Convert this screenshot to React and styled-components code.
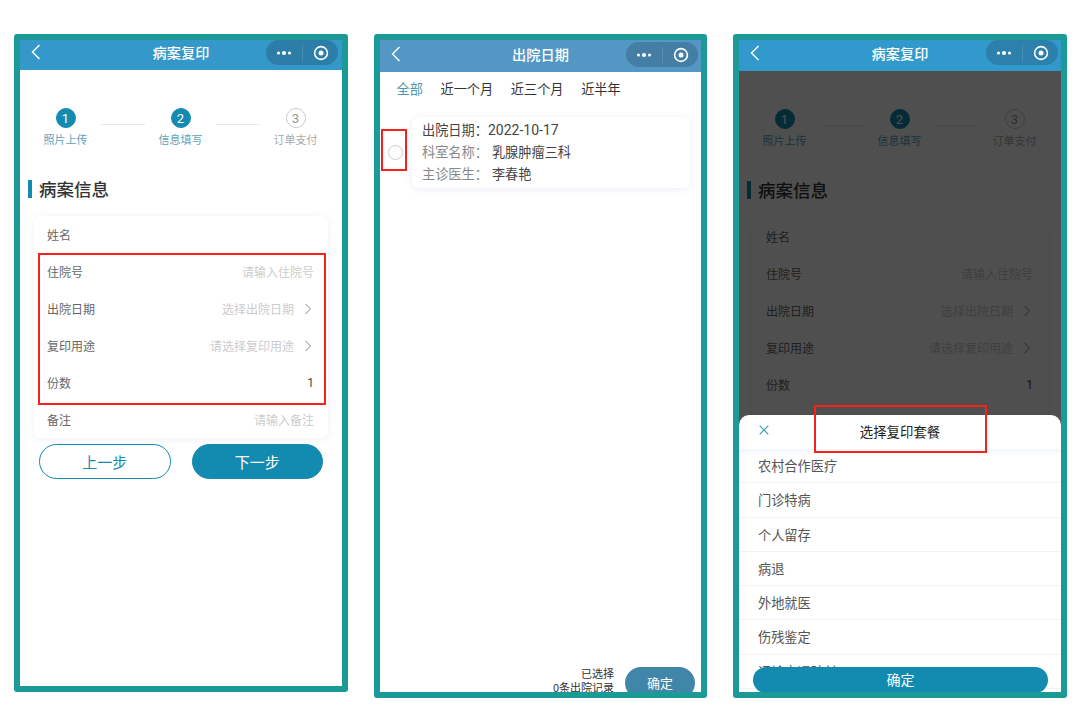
import React from "react";
import styled, { createGlobalStyle } from "styled-components";

const formRows = [
    { label: "姓名", value: "" },
    { label: "住院号", value: "请输入住院号" },
    { label: "出院日期", value: "选择出院日期", arrow: true },
    { label: "复印用途", value: "请选择复印用途", arrow: true },
    { label: "份数", value: "1", filled: true },
    { label: "备注", value: "请输入备注" },
];

const steps = [
    { no: 1, label: "照片上传", active: true },
    { no: 2, label: "信息填写", active: true },
    { no: 3, label: "订单支付", active: false },
];

const tabs = ["全部", "近一个月", "近三个月", "近半年"];

const purposes = ["农村合作医疗", "门诊特病", "个人留存", "病退", "外地就医", "伤残鉴定", "运输交通赔付"];

const NavBar = ({ title, color, pillColor, height, pillTop, pillRight, titleTop }) => (
    <Header $color={color} $height={height}>
        <BackIcon viewBox="0 0 10 16" $top={titleTop + 2}>
            <path d="M8.5 1 L1.5 8 L8.5 15" />
        </BackIcon>
        <HeaderTitle $top={titleTop}>{title}</HeaderTitle>
        <Capsule $color={pillColor} $top={pillTop} $right={pillRight}>
            <svg width="16" height="6" viewBox="0 0 16 6">
                <circle cx="2.5" cy="3" r="1.6" fill="#fff" />
                <circle cx="8" cy="3" r="2.1" fill="#fff" />
                <circle cx="13.5" cy="3" r="1.6" fill="#fff" />
            </svg>
            <CapsuleLine />
            <svg width="16" height="16" viewBox="0 0 16 16">
                <circle cx="8" cy="8" r="6.4" fill="none" stroke="#fff" strokeWidth="1.6" />
                <circle cx="8" cy="8" r="2.5" fill="#fff" />
            </svg>
        </Capsule>
    </Header>
);

const RecordForm = ({ cardGap }) => (
    <>
        <Steps>
            {steps.map((step, index) => (
                <React.Fragment key={step.no}>
                    {index > 0 && <StepLine />}
                    <Step>
                        <StepNo $active={step.active}>{step.no}</StepNo>
                        <StepLabel $active={step.active}>{step.label}</StepLabel>
                    </Step>
                </React.Fragment>
            ))}
        </Steps>
        <SectionTitle>病案信息</SectionTitle>
        <FormCard $gap={cardGap}>
            {formRows.map((row) => (
                <FormRow key={row.label}>
                    <span>{row.label}</span>
                    <FormValue $filled={row.filled}>
                        {row.value}
                        {row.arrow && (
                            <ArrowIcon viewBox="0 0 8 12">
                                <path d="M1.5 1 L6.5 6 L1.5 11" />
                            </ArrowIcon>
                        )}
                    </FormValue>
                </FormRow>
            ))}
        </FormCard>
        <Buttons>
            <StepButton>上一步</StepButton>
            <StepButton $primary>下一步</StepButton>
        </Buttons>
    </>
);

const App = () => (
    <Page>
        <GlobalStyle />

        <Phone $height={658}>
            <NavBar title="病案复印" color="#3498cb" pillColor="#2c7ea9" height={30} pillTop={0} pillRight={4} titleTop={2} />
            <RecordForm cardGap={18} />
            <Highlight $left={18} $top={213} $width={288} $height={152} />
        </Phone>

        <Phone $height={664} $width={333}>
            <NavBar title="出院日期" color="#5397c5" pillColor="#457ea5" height={32} pillTop={2} pillRight={3} titleTop={4} />
            <Tabs>
                {tabs.map((tab, index) => (
                    <Tab key={tab} $active={index === 0}>{tab}</Tab>
                ))}
            </Tabs>
            <RecordRow>
                <Radio />
                <RecordCard>
                    <RecordLine $dark>出院日期：<DateValue>2022-10-17</DateValue></RecordLine>
                    <RecordLine>科室名称：<RecordValue>乳腺肿瘤三科</RecordValue></RecordLine>
                    <RecordLine>主诊医生：<RecordValue>李春艳</RecordValue></RecordLine>
                </RecordCard>
            </RecordRow>
            <Highlight $left={1} $top={89} $width={26} $height={42} />
            <RecordFooter>
                <FooterText>
                    已选择
                    <br />
                    0条出院记录
                </FooterText>
                <FooterButton>确定</FooterButton>
            </RecordFooter>
        </Phone>

        <Phone $height={664}>
            <NavBar title="病案复印" color="#3199cc" pillColor="#2c80ab" height={31} pillTop={0} pillRight={3} titleTop={3} />
            <RecordForm cardGap={19} />
            <Dim />
            <Sheet>
                <SheetHead>
                    <CloseIcon viewBox="0 0 10 10">
                        <path d="M0.7 0.7 L9.3 9.3 M9.3 0.7 L0.7 9.3" />
                    </CloseIcon>
                    选择复印套餐
                </SheetHead>
                {purposes.map((item) => (
                    <SheetRow key={item}>{item}</SheetRow>
                ))}
                <SheetButton>确定</SheetButton>
            </Sheet>
            <Highlight $left={75} $top={365} $width={173} $height={48} />
        </Phone>
    </Page>
);

export default App;

const GlobalStyle = createGlobalStyle`
    * {
        box-sizing: border-box;
    }
    html, body {
        margin: 0;
        background: #fff;
    }
    body {
        font-family: "Noto Sans CJK SC", "Noto Sans", sans-serif;
        color: #333;
    }
`;

const Page = styled.div`
    display: flex;
    align-items: flex-start;
    gap: 26px;
    width: 1080px;
    height: 714px;
    padding: 34px 0 0 14px;
    overflow: hidden;
`;

const Phone = styled.section`
    position: relative;
    display: flex;
    flex-direction: column;
    flex: none;
    width: ${(p) => p.$width || 334}px;
    height: ${(p) => p.$height}px;
    border: 6px solid #1b9a97;
    border-radius: 3px;
    background: #fff;
    overflow: hidden;
`;

const Header = styled.header`
    position: relative;
    z-index: 2;
    display: grid;
    grid-template-columns: 1fr auto 1fr;
    align-items: start;
    flex: none;
    height: ${(p) => p.$height}px;
    background: ${(p) => p.$color};
    color: #fff;
`;

const BackIcon = styled.svg`
    width: 10px;
    height: 16px;
    margin: ${(p) => p.$top}px 0 0 11px;
    fill: none;
    stroke: #fff;
    stroke-width: 1.4;
`;

const HeaderTitle = styled.h1`
    margin: ${(p) => p.$top}px 0 0;
    font-size: 14.2px;
    font-weight: 500;
    line-height: 20px;
`;

const Capsule = styled.div`
    justify-self: end;
    display: grid;
    grid-template-columns: 36px 1px 35px;
    place-items: center;
    width: 72px;
    height: 25px;
    margin: ${(p) => p.$top}px ${(p) => p.$right}px 0 0;
    border-radius: 13px;
    background: ${(p) => p.$color};
`;

const CapsuleLine = styled.span`
    width: 1px;
    height: 16px;
    background: rgba(255, 255, 255, 0.12);
`;

const Steps = styled.div`
    display: flex;
    align-items: flex-start;
    padding: 38px 0 0 15.5px;
`;

const Step = styled.div`
    display: flex;
    flex-direction: column;
    align-items: center;
    flex: none;
    width: 60px;
`;

const StepNo = styled.span`
    display: flex;
    align-items: center;
    justify-content: center;
    width: 20px;
    height: 20px;
    border-radius: 50%;
    border: 1px solid ${(p) => (p.$active ? "#138ab0" : "#ccc")};
    background: ${(p) => (p.$active ? "#138ab0" : "#fff")};
    color: ${(p) => (p.$active ? "#fff" : "#999")};
    font-family: "Roboto", sans-serif;
    font-size: 13px;
`;

const StepLabel = styled.span`
    margin-top: 3px;
    font-size: 11px;
    line-height: 16px;
    color: ${(p) => (p.$active ? "#5ba3bc" : "#a9a9a9")};
`;

const StepLine = styled.span`
    flex: none;
    width: 44px;
    height: 1px;
    margin: 16px 5.5px 0;
    background: #e9e9e9;
`;

const SectionTitle = styled.h2`
    margin: 33px 0 0 8px;
    padding-left: 7px;
    border-left: 4px solid #138ab0;
    font-size: 17.5px;
    font-weight: 500;
    line-height: 18px;
    color: #333;
`;

const FormCard = styled.div`
    margin: ${(p) => p.$gap}px 14px 0 14px;
    border-radius: 7px;
    background: #fff;
    box-shadow: 0 1px 8px rgba(120, 150, 200, 0.14);
`;

const FormRow = styled.div`
    display: flex;
    align-items: center;
    justify-content: space-between;
    height: 37px;
    padding: 0 14px 0 13px;
    font-size: 12px;
    color: #666;
`;

const FormValue = styled.span`
    display: flex;
    align-items: center;
    font-family: ${(p) => (p.$filled ? '"Roboto", sans-serif' : "inherit")};
    color: ${(p) => (p.$filled ? "#444" : "#ccc")};
`;

const ArrowIcon = styled.svg`
    width: 8px;
    height: 12px;
    margin: 0 2px 0 10px;
    fill: none;
    stroke: #888;
    stroke-width: 1;
`;

const Buttons = styled.div`
    display: flex;
    gap: 21px;
    margin: 6px 19px 0 19px;
`;

const StepButton = styled.button`
    flex: 1;
    height: 35px;
    padding: 0;
    border: 1px solid #138ab0;
    border-radius: 18px;
    background: ${(p) => (p.$primary ? "#138ab0" : "#fff")};
    color: ${(p) => (p.$primary ? "#fff" : "#138ab0")};
    font-family: inherit;
    font-size: 15px;
`;

const Highlight = styled.div`
    position: absolute;
    z-index: 4;
    left: ${(p) => p.$left}px;
    top: ${(p) => p.$top}px;
    width: ${(p) => p.$width}px;
    height: ${(p) => p.$height}px;
    border: 2px solid #f5211b;
    pointer-events: none;
`;

const Tabs = styled.nav`
    display: flex;
    gap: 17.6px;
    padding: 7px 0 0 16.5px;
`;

const Tab = styled.span`
    font-size: 13.2px;
    line-height: 20px;
    color: ${(p) => (p.$active ? "#4f97aa" : "#333")};
`;

const RecordRow = styled.div`
    display: flex;
    align-items: center;
    gap: 9px;
    margin-top: 18px;
    padding-left: 8px;
`;

const Radio = styled.span`
    flex: none;
    width: 15px;
    height: 15px;
    border: 1px solid #ccc;
    border-radius: 50%;
`;

const RecordCard = styled.div`
    width: 278px;
    padding: 2px 10px 3px;
    border-radius: 6px;
    background: #fff;
    box-shadow: 0 1px 7px rgba(120, 150, 200, 0.16);
`;

const RecordLine = styled.div`
    font-size: 13.2px;
    line-height: 22px;
    color: ${(p) => (p.$dark ? "#444" : "#888")};
    white-space: nowrap;
`;

const DateValue = styled.span`
    font-family: "Roboto", sans-serif;
    font-size: 14px;
    color: #444;
`;

const RecordValue = styled.span`
    margin-left: 4px;
    color: #444;
`;

const RecordFooter = styled.footer`
    display: flex;
    justify-content: flex-end;
    gap: 11px;
    margin-top: auto;
    padding-right: 6px;
    height: 25px;
`;

const FooterText = styled.div`
    margin-top: -1px;
    font-size: 11px;
    line-height: 14px;
    text-align: right;
    color: #333;
    white-space: nowrap;
`;

const FooterButton = styled.div`
    width: 70px;
    height: 32px;
    padding-top: 6px;
    border-radius: 16px;
    background: #3f86a8;
    color: #fff;
    font-size: 13px;
    line-height: 20px;
    text-align: center;
`;

const Dim = styled.div`
    position: absolute;
    inset: 0;
    z-index: 1;
    background: rgba(0, 0, 0, 0.69);
`;

const Sheet = styled.div`
    position: absolute;
    z-index: 3;
    left: 0;
    right: 0;
    bottom: 0;
    height: 277px;
    border-radius: 10px 10px 0 0;
    background: #fff;
    overflow: hidden;
`;

const SheetHead = styled.div`
    position: relative;
    height: 34px;
    padding-top: 6px;
    font-size: 13.4px;
    line-height: 20px;
    text-align: center;
    color: #222;
    box-shadow: 0 2px 5px rgba(120, 150, 200, 0.14);
`;

const CloseIcon = styled.svg`
    position: absolute;
    left: 20px;
    top: 10px;
    width: 10px;
    height: 10px;
    fill: none;
    stroke: #3a9ab5;
    stroke-width: 1.2;
`;

const SheetRow = styled.div`
    height: 34.25px;
    padding: 1px 19px 0;
    border-bottom: 1px solid #f2f2f2;
    font-size: 13.2px;
    line-height: 32px;
    color: #555;
`;

const SheetButton = styled.div`
    position: absolute;
    left: 14px;
    right: 13px;
    bottom: -1px;
    height: 26px;
    border-radius: 13px;
    background: #138ab0;
    color: #fff;
    font-size: 14px;
    line-height: 25px;
    text-align: center;
`;
